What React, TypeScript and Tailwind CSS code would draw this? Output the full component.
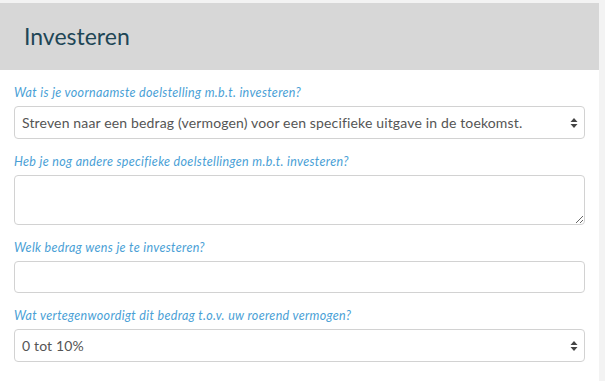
import type { ReactNode } from 'react'

const font = { fontFamily: 'Lato, "Open Sans", sans-serif' }

function Label({ children }: { children: ReactNode }) {
  return (
    <label className="block text-[12.5px] leading-[17px] italic tracking-[0.33px] text-[#4a9fd6] mb-[5px]">
      {children}
    </label>
  )
}

function Arrows() {
  return (
    <svg className="absolute right-[7px] top-1/2 -translate-y-1/2" width="8" height="12" viewBox="0 0 8 12">
      <path d="M4 1 L7.5 5 H0.5 Z" fill="#444" />
      <path d="M4 11 L7.5 7 H0.5 Z" fill="#444" />
    </svg>
  )
}

function Select({ value }: { value: string }) {
  return (
    <div className="relative">
      <select
        defaultValue={value}
        className="w-full h-[33px] appearance-none bg-white border border-[#d2d2d2] rounded-[4px] pl-[7px] pr-6 text-[14px] tracking-[0.15px] text-[#555] outline-none"
        style={font}
      >
        <option>{value}</option>
      </select>
      <Arrows />
    </div>
  )
}

export default function App() {
  return (
    <div className="w-[605px] h-[381px] bg-[#f3f3f3] pt-[3px] overflow-hidden" style={font}>
      <div className="w-[599px] h-[378px] bg-white">
        <div className="h-[67px] bg-[#d7d7d7] flex items-center px-6">
          <h1 className="text-[23px] text-[#1e4656]">Investeren</h1>
        </div>
        <div className="px-[14px] pt-[14px] flex flex-col gap-[14px]">
          <div>
            <Label>Wat is je voornaamste doelstelling m.b.t. investeren?</Label>
            <Select value="Streven naar een bedrag (vermogen) voor een specifieke uitgave in de toekomst." />
          </div>
          <div>
            <Label>Heb je nog andere specifieke doelstellingen m.b.t. investeren?</Label>
            <textarea className="block w-full h-[50px] border border-[#d2d2d2] rounded-[4px] bg-white outline-none" />
          </div>
          <div>
            <Label>Welk bedrag wens je te investeren?</Label>
            <input className="block w-full h-[32px] border border-[#d2d2d2] rounded-[4px] bg-white outline-none" />
          </div>
          <div>
            <Label>Wat vertegenwoordigt dit bedrag t.o.v. uw roerend vermogen?</Label>
            <Select value="0 tot 10%" />
          </div>
        </div>
      </div>
    </div>
  )
}
